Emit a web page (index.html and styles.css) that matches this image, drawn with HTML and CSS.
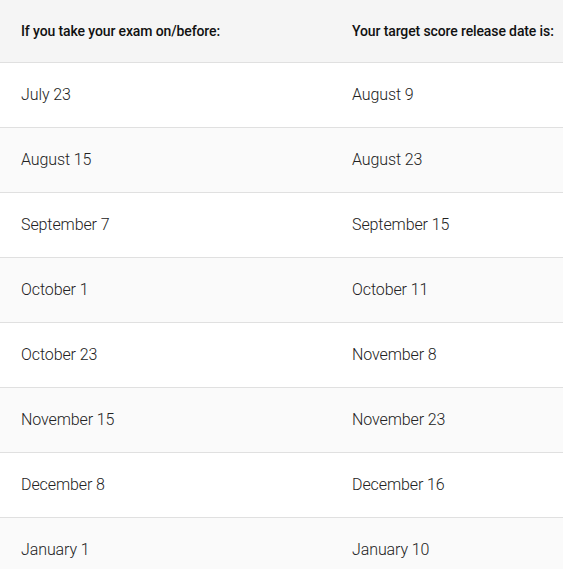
FILE: index.html
```html
<!DOCTYPE html>
<html>
<head>
<meta charset="utf-8">
<link rel="stylesheet" href="styles.css">
</head>
<body>
<table class="score-table">
  <thead>
    <tr><th class="col-a">If you take your exam on/before:</th><th>Your target score release date is:</th></tr>
  </thead>
  <tbody>
    <tr><td>July 23</td><td>August 9</td></tr>
    <tr><td>August 15</td><td>August 23</td></tr>
    <tr><td>September 7</td><td>September 15</td></tr>
    <tr><td>October 1</td><td>October 11</td></tr>
    <tr><td>October 23</td><td>November 8</td></tr>
    <tr><td>November 15</td><td>November 23</td></tr>
    <tr><td>December 8</td><td>December 16</td></tr>
    <tr><td>January 1</td><td>January 10</td></tr>
  </tbody>
</table>
</body>
</html>
```

FILE: styles.css
```css
html, body {
  margin: 0;
  padding: 0;
  background: #ffffff;
  overflow: hidden;
}
.score-table {
  border-collapse: collapse;
  width: 100%;
  font-family: Roboto, "Noto Sans", sans-serif;
  table-layout: fixed;
}
.score-table th {
  background: #f5f5f5;
  height: 62px;
  padding: 0 0 0 21px;
  text-align: left;
  font-weight: 500;
  font-size: 14px;
  color: #111;
  letter-spacing: -0.12px;
  white-space: nowrap;
  border-bottom: 1px solid #e0e0e0;
  box-sizing: border-box;
}
.score-table th.col-a {
  width: 331px;
}
.score-table td {
  height: 64px;
  padding: 0 0 0 21px;
  font-size: 16px;
  font-weight: 300;
  color: #222;
  letter-spacing: -0.1px;
  border-bottom: 1px solid #e0e0e0;
}
.score-table tbody tr:nth-child(even) td {
  background: #fafafa;
}
```
